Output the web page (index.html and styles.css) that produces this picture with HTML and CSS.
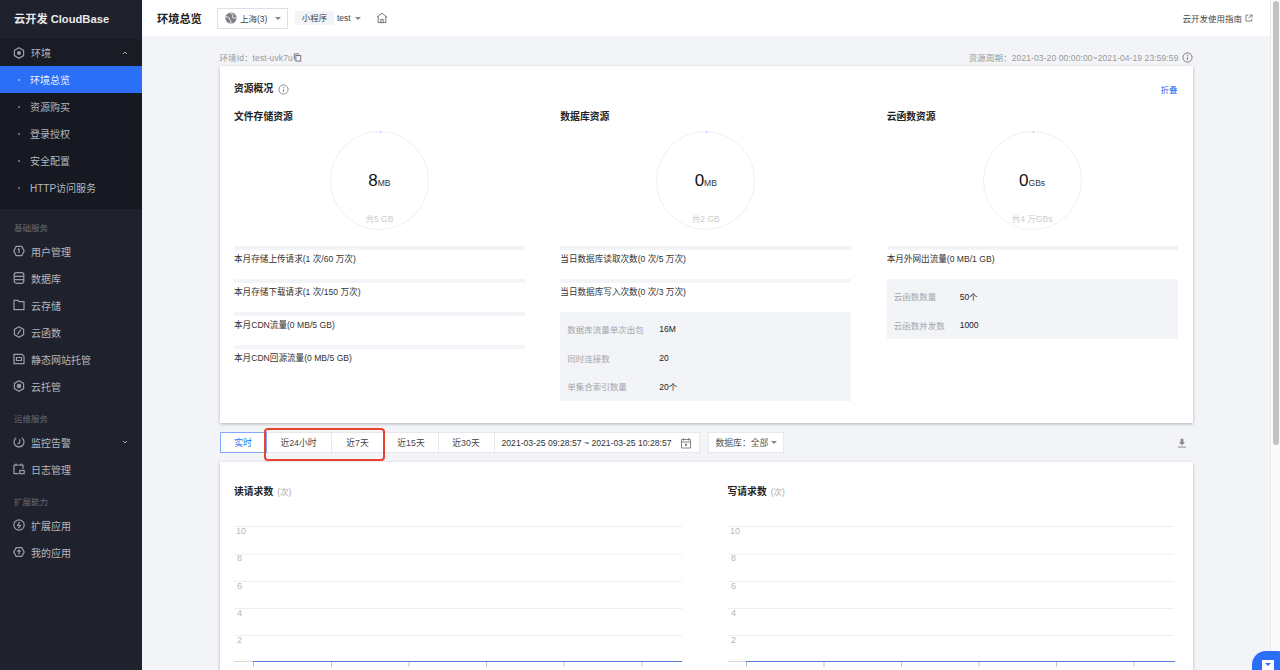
FILE: index.html
```html
<!DOCTYPE html>
<html lang="zh-CN">
<head>
<meta charset="utf-8">
<title>云开发 CloudBase</title>
<link rel="stylesheet" href="styles.css">
</head>
<body>
<div class="app">
  <aside class="sidebar">
    <div class="logo">云开发 CloudBase</div>
    <div class="nav-item env">
      <svg class="ico" viewBox="0 0 12 12"><path d="M6 .8l4.600 2.600v5.200L6 11.200 1.400 8.600V3.400z"/><circle cx="6" cy="6" r="2" class="fill"/></svg>
      <span>环境</span>
      <svg class="chev" viewBox="0 0 6 4"><path d="M1 3l2-2 2 2"/></svg>
    </div>
    <div class="submenu">
      <div class="sub-item active"><i class="dot"></i>环境总览</div>
      <div class="sub-item"><i class="dot"></i>资源购买</div>
      <div class="sub-item"><i class="dot"></i>登录授权</div>
      <div class="sub-item"><i class="dot"></i>安全配置</div>
      <div class="sub-item"><i class="dot"></i>HTTP访问服务</div>
    </div>
    <div class="group">基础服务</div>
    <div class="nav-item"><svg class="ico" viewBox="0 0 12 12"><path d="M3.200 1.400h5.600L11.200 6 8.800 10.600H3.200L.8 6z"/><path d="M6 3.500v4.600M4.700 4.600L6 3.500"/></svg><span>用户管理</span></div>
    <div class="nav-item"><svg class="ico" viewBox="0 0 12 12"><rect x="1.200" y=".7" width="9.600" height="10.600" rx="2.200"/><path d="M1.200 4.300h9.600M1.200 7.700h9.600"/></svg><span>数据库</span></div>
    <div class="nav-item"><svg class="ico" viewBox="0 0 12 12"><path d="M1 1.300h4l1 1.400h5v8H1z"/></svg><span>云存储</span></div>
    <div class="nav-item"><svg class="ico" viewBox="0 0 12 12"><path d="M6 .8l4.600 2.600v5.200L6 11.200 1.400 8.600V3.400z"/><path d="M7.600 3.600L4.600 8.400"/></svg><span>云函数</span></div>
    <div class="nav-item"><svg class="ico" viewBox="0 0 12 12"><path d="M1 1.300h8l2 2v7.400H1z"/><path d="M3.500 4.500h5v3h-5z"/></svg><span>静态网站托管</span></div>
    <div class="nav-item"><svg class="ico" viewBox="0 0 12 12"><path d="M6 .8l4.600 2.600v5.200L6 11.200 1.400 8.600V3.400z"/><circle cx="6" cy="6" r="2.300" class="fill"/></svg><span>云托管</span></div>
    <div class="group">运维服务</div>
    <div class="nav-item"><svg class="ico" viewBox="0 0 12 12"><path d="M3.200 1.800A5 5 0 1 0 8.800 1.800"/><path d="M6.800 3.200C7 5 7 7.400 4.800 7.800"/></svg><span>监控告警</span><svg class="chev" viewBox="0 0 6 4"><path d="M1 1l2 2 2-2"/></svg></div>
    <div class="nav-item"><svg class="ico" viewBox="0 0 12 12"><path d="M5.500 10.700H1V2h9v4"/><path d="M3 .5v2.500M8 .5v2.500"/><rect x="6.800" y="7.500" width="4.400" height="3.200"/></svg><span>日志管理</span></div>
    <div class="group">扩展能力</div>
    <div class="nav-item"><svg class="ico" viewBox="0 0 12 12"><circle cx="6" cy="6" r="5.200"/><path d="M6.600 2.800L4.600 6.300h2.800L5.400 9.200"/></svg><span>扩展应用</span></div>
    <div class="nav-item"><svg class="ico" viewBox="0 0 12 12"><path d="M3.200 1.600h5.600L11.200 6 8.800 10.400H3.200L.8 6z"/><path d="M6 8.400V4M4.300 5.600L6 4l1.700 1.600"/></svg><span>我的应用</span></div>
  </aside>

  <div class="workspace">
    <header class="topbar">
      <h1 class="page-title">环境总览</h1>
      <div class="region">
        <svg class="globe" viewBox="0 0 12 12"><circle cx="6" cy="6" r="5.600"/><path class="gl" d="M.8 5c2.700-.6 3.200.5 3.700 2 .4 1.500 1.500 1.600 1.500 4M5 .5c.6 1.500 2.500 1.300 3 2.500.4 1-1 1.500-.6 2.500.3.800 2 .6 4 .3"/></svg>
        <span>上海(3)</span>
        <i class="caret region-caret"></i>
      </div>
      <span class="tag">小程序</span>
      <span class="env-name">test</span>
      <i class="caret"></i>
      <svg class="home" viewBox="0 0 12 12"><path d="M1 5.200L6 1.200l5 4M2.200 4.400v6.200h7.600V4.400M4.800 10.600V7.400h2.400v3.200"/></svg>
      <a class="guide">云开发使用指南
        <svg viewBox="0 0 10 10"><path d="M4 1.500H1.200v7.300h7.300V6M5.500 1.200h3.300v3.300M8.600 1.400L4.500 5.500"/></svg>
      </a>
    </header>

    <main class="content">
      <div class="meta">
        <span class="env-id">环境Id：test-uvk7u<svg viewBox="0 0 10 10"><path d="M6.800 1H1.500v6.500"/><rect x="3.200" y="2.800" width="5.400" height="6.200"/></svg></span>
        <span class="period">资源周期：2021-03-20 00:00:00~2021-04-19 23:59:59<svg viewBox="0 0 12 12"><circle cx="6" cy="6" r="5"/><path d="M6 5.200v3.500M6 3v1.200"/></svg></span>
      </div>

      <section class="card overview">
        <div class="card-head">
          <h2 class="title">资源概况<svg viewBox="0 0 12 12"><circle cx="6" cy="6" r="5"/><path d="M6 5.200v3.500M6 3v1.200"/></svg></h2>
          <a class="fold">折叠</a>
        </div>
        <div class="cols">
          <div class="col">
            <h3 class="title">文件存储资源</h3>
            <div class="ring"><b class="ring-num">8<small>MB</small></b><span class="ring-total">共5 GB</span></div>
            <div class="stat"><div class="bar"></div><p>本月存储上传请求(1 次/60 万次)</p></div>
            <div class="stat"><div class="bar"></div><p>本月存储下载请求(1 次/150 万次)</p></div>
            <div class="stat"><div class="bar"></div><p>本月CDN流量(0 MB/5 GB)</p></div>
            <div class="stat"><div class="bar"></div><p>本月CDN回源流量(0 MB/5 GB)</p></div>
          </div>
          <div class="col">
            <h3 class="title">数据库资源</h3>
            <div class="ring"><b class="ring-num">0<small>MB</small></b><span class="ring-total">共2 GB</span></div>
            <div class="stat"><div class="bar"></div><p>当日数据库读取次数(0 次/5 万次)</p></div>
            <div class="stat"><div class="bar"></div><p>当日数据库写入次数(0 次/3 万次)</p></div>
            <div class="limits db">
              <div class="limit"><span>数据库流量单次出包</span><b>16M</b></div>
              <div class="limit"><span>同时连接数</span><b>20</b></div>
              <div class="limit"><span>单集合索引数量</span><b>20个</b></div>
            </div>
          </div>
          <div class="col">
            <h3 class="title">云函数资源</h3>
            <div class="ring"><b class="ring-num">0<small>GBs</small></b><span class="ring-total">共4 万GBs</span></div>
            <div class="stat"><div class="bar"></div><p>本月外网出流量(0 MB/1 GB)</p></div>
            <div class="limits fn">
              <div class="limit"><span>云函数数量</span><b>50个</b></div>
              <div class="limit"><span>云函数并发数</span><b>1000</b></div>
            </div>
          </div>
        </div>
      </section>

      <div class="toolbar">
        <div class="tabs">
          <button class="tab on">实时</button>
          <button class="tab w65">近24小时</button>
          <button class="tab w53">近7天</button>
          <button class="tab w54">近15天</button>
          <button class="tab w56">近30天</button>
          <div class="tab date">2021-03-25 09:28:57 ~ 2021-03-25 10:28:57
            <svg viewBox="0 0 12 12"><path d="M1.500 2.500h9v8.500h-9zM1.500 5h9M3.500 1v2.500M8.500 1v2.500"/><rect class="solid" x="5" y="6.800" width="2" height="2"/></svg>
          </div>
          <i class="highlight"></i>
        </div>
        <div class="db-select">数据库：全部<i class="caret"></i></div>
        <svg class="download" viewBox="0 0 10 10"><path d="M3.600 .8h2.800v3.400H8L5 7.300 2 4.200h1.600z" class="solid"/><path d="M1 9h8" /></svg>
      </div>

      <section class="card charts">
        <div class="chart">
          <h3 class="title">读请求数<small>(次)</small></h3>
          <svg class="plot" viewBox="0 0 448 160">
            <g class="rules"><path d="M0 8.500h448M0 36h448M0 63.500h448M0 90.500h448M0 117.500h448"/></g>
            <g class="labels"><text x="2" y="15.500">10</text><text x="3" y="43">8</text><text x="3" y="70.500">6</text><text x="3" y="97.500">4</text><text x="3" y="124.500">2</text></g>
            <path class="axis" d="M0 143.500h19"/>
            <path class="ticks" d="M19.500 144v5M97.500 144v5M175 144v5M252.500 144v5M330 144v5M408 144v5"/>
            <path class="series" d="M19 143.500h429"/>
          </svg>
        </div>
        <div class="chart">
          <h3 class="title">写请求数<small>(次)</small></h3>
          <svg class="plot" viewBox="0 0 448 160">
            <g class="rules"><path d="M0 8.500h446M0 36h446M0 63.500h446M0 90.500h446M0 117.500h446"/></g>
            <g class="labels"><text x="2" y="15.500">10</text><text x="3" y="43">8</text><text x="3" y="70.500">6</text><text x="3" y="97.500">4</text><text x="3" y="124.500">2</text></g>
            <path class="axis" d="M0 143.500h18"/>
            <path class="ticks" d="M18.500 144v5M96 144v5M173.500 144v5M251 144v5M328.500 144v5M406 144v5"/>
            <path class="series" d="M18 143.500h429"/>
          </svg>
        </div>
      </section>
    </main>
  </div>

  <div class="scrollbar"><div class="thumb"></div></div>

  <div class="float-btn"><svg viewBox="0 0 12 10"><path d="M0 0h12v10H0z" fill="#fff"/><path d="M3 3h6L6 6z" fill="#2a6ff6"/></svg></div>
</div>
</body>
</html>
```

FILE: styles.css
```css
* { box-sizing: border-box; margin: 0; padding: 0; }
html, body { height: 100%; overflow: hidden; }
body {
  font-family: "Liberation Sans", "Noto Sans CJK SC", sans-serif;
  font-size: 9px;
  color: #222;
  background: #f2f4f8;
}
.app { display: flex; height: 670px; position: relative; overflow: hidden; }

/* Sidebar */
.sidebar { width: 142px; flex: none; background: #1f222d; color: #b4b7be; font-size: 10px; }
.logo { height: 39px; line-height: 39px; padding-left: 14px; font-size: 11.200px; font-weight: 700; color: #e8e9eb; }
.nav-item { display: flex; align-items: center; height: 27px; padding: 0 14px 0 13px; gap: 6px; }
.nav-item.env { background: #191c25; }
.ico { width: 12px; height: 12px; flex: none; fill: none; stroke: #9a9ea6; stroke-width: 1.200; overflow: visible; }
.ico .fill { fill: #9a9ea6; stroke: none; }
.chev { width: 6px; height: 4px; margin-left: auto; fill: none; stroke: #a6a9b0; stroke-width: 1; }
.submenu { background: #161921; height: 142.500px; }
.sub-item { display: flex; align-items: center; height: 27.100px; padding-left: 18px; }
.sub-item .dot { width: 2px; height: 2px; margin-right: 10px; background: #80848d; border-radius: 50%; flex: none; }
.sub-item.active { background: #2a6ff6; color: #e9f0fe; }
.sub-item.active .dot { background: #9fbffb; }
.group { padding: 13.500px 14px 3.500px; line-height: 12px; font-size: 8.500px; color: #666a75; }

/* Top bar */
.workspace { flex: 1; min-width: 0; display: flex; flex-direction: column; }
.topbar { height: 36px; flex: none; background: #fff; display: flex; align-items: center; padding: 0 17px 0 15px; }
.page-title { width: 60px; font-size: 11.200px; font-weight: 700; color: #222; }
.region { width: 71px; height: 21px; border: 1px solid #dcdfe4; display: flex; align-items: center; padding-left: 7px; font-size: 8.500px; color: #444; gap: 3px; }
.globe { width: 12px; height: 12px; flex: none; fill: #7d7f84; }
.globe .gl { fill: none; stroke: #fff; stroke-width: .9; }
.caret { width: 0; height: 0; border: 3px solid transparent; border-top: 3.500px solid #888; border-bottom: 0; display: inline-block; flex: none; }
.region-caret { margin-left: auto; margin-right: 6px; }
.tag { margin-left: 7px; width: 39px; height: 14px; line-height: 14px; text-align: center; background: #f2f4f8; font-size: 8.500px; color: #444; }
.env-name { margin-left: 3px; margin-right: 4px; font-size: 8.500px; color: #444; }
.home { width: 12px; height: 12px; margin-left: 15px; fill: none; stroke: #666; stroke-width: .9; }
.guide { margin-left: auto; display: flex; align-items: center; gap: 3px; font-size: 8.500px; color: #444; }
.guide svg { width: 8px; height: 8px; fill: none; stroke: #666; stroke-width: 1; }

/* Content */
.content { width: 973px; margin: 0 auto; flex: 1; min-height: 0; }
.meta { height: 30px; padding-top: 12px; display: flex; justify-content: space-between; align-items: center; font-size: 8.500px; color: #999; letter-spacing: .1px; }
.env-id, .period { display: flex; align-items: center; }
.env-id svg { width: 9px; height: 9px; fill: none; stroke: #777; stroke-width: 1.100; margin-top: 1px; }
.period svg { width: 11px; height: 11px; margin-left: 3px; fill: none; stroke: #666; stroke-width: .9; }
.card { background: #fff; box-shadow: 0 1px 3px rgba(60, 60, 70, .35); }
.title { font-size: 9.800px; font-weight: 700; line-height: 14px; color: #222; }
.overview { height: 357px; padding: 16px 15px 0 14.500px; }
.card-head { display: flex; justify-content: space-between; align-items: center; height: 14px; margin-bottom: 14px; }
.card-head .title { display: flex; align-items: center; gap: 5px; }
.card-head svg { width: 11px; height: 11px; fill: none; stroke: #777; stroke-width: .9; }
.fold { font-size: 8.500px; color: #2a6ff6; }
.cols { display: grid; grid-template-columns: repeat(3, 1fr); column-gap: 35.500px; }
.ring { position: relative; width: 99px; height: 99px; margin: 7px auto 16px; border: 1px solid #eef0f2; border-radius: 50%; display: flex; align-items: center; justify-content: center; }
.ring::before { content: ""; position: absolute; top: -1px; left: 49px; width: 1px; height: 2px; background: #a9c4fa; }
.ring-num { font-size: 17px; font-weight: 400; color: #111; line-height: 1; }
.ring-num small { font-size: 8.500px; color: #333; }
.ring-total { position: absolute; bottom: 5px; left: 0; right: 0; text-align: center; font-size: 8.500px; color: #ccc; }
.stat { height: 33px; }
.bar { height: 4px; background: #f2f4f8; margin-bottom: 3px; }
.stat p { line-height: 12px; font-size: 8.600px; color: #333; white-space: nowrap; }
.limits { background: #f2f4f8; padding: 3px 7px 0; font-size: 8.500px; }
.limit { display: flex; align-items: center; height: 28.500px; }
.limit span { color: #a4a6ab; flex: none; }
.limit b { font-weight: 400; color: #222; }
.db .limit span { width: 92px; }
.fn .limit span { width: 66px; }

/* Toolbar */
.toolbar { height: 22px; margin: 9px 0 8px; display: flex; align-items: flex-start; }
.tabs { display: flex; position: relative; height: 21px; }
.tab { height: 21px; width: 47px; border: 1px solid #e6e8ec; border-left: 0; background: #fff; font: inherit; font-size: 8.800px; color: #444; display: flex; align-items: center; justify-content: center; }
.tab.on { border: 1px solid #7fa8f8; color: #2a6ff6; }
.w65 { width: 65px; }
.w53 { width: 53px; border-right-color: #fff; }
.w54 { width: 54px; }
.w56 { width: 56px; }
.tab.date { width: 205px; justify-content: space-between; padding: 0 7px 0 7px; color: #333; white-space: nowrap; font-size: 8.650px; }
.date svg { width: 12px; height: 12px; fill: none; stroke: #777; stroke-width: .9; flex: none; }
.date .solid { fill: #777; stroke: none; }
.highlight { position: absolute; left: 44px; top: -4px; width: 121px; height: 33px; border: 2px solid #e8432e; border-radius: 4px; }
.db-select { margin-left: 8px; width: 76px; height: 21px; background: #fff; border: 1px solid #e6e8ec; display: flex; align-items: center; justify-content: space-between; padding: 0 6px 0 7px; font-size: 8.800px; color: #555; }
.download { width: 10px; height: 10px; margin: 6px 6px 0 auto; fill: none; stroke: #888; stroke-width: 1; }
.download .solid { fill: #888; stroke: none; }

/* Charts */
.charts { height: 300px; padding: 23px 18px 0 14.500px; display: grid; grid-template-columns: 448px 1fr; column-gap: 45.500px; }
.title small { margin-left: 4px; font-size: 8.500px; font-weight: 400; color: #aaa; }
.plot { display: block; width: 448px; height: 160px; margin-top: 19px; }
.rules path { stroke: #efefef; stroke-width: 1; fill: none; }
.labels text { font-size: 9px; fill: #b8b8b8; }
.axis { stroke: #d8d8d8; fill: none; }
.ticks { stroke: #c4c4c4; fill: none; }
.series { stroke: #5b79d8; stroke-width: 1; fill: none; }

/* Scrollbar and floating button */
.scrollbar { width: 10px; flex: none; background: #fafafa; border-left: 1px solid #e9e9e9; padding: 1px 1px 0 2px; }
.thumb { height: 444px; background: #c2c2c2; border-radius: 3px; }
.float-btn { position: absolute; left: 1252px; top: 651px; width: 40px; height: 40px; background: #2a6ff6; border-radius: 14px; display: flex; padding: 9px 0 0 10px; }
.float-btn svg { width: 12px; height: 10px; }
```
